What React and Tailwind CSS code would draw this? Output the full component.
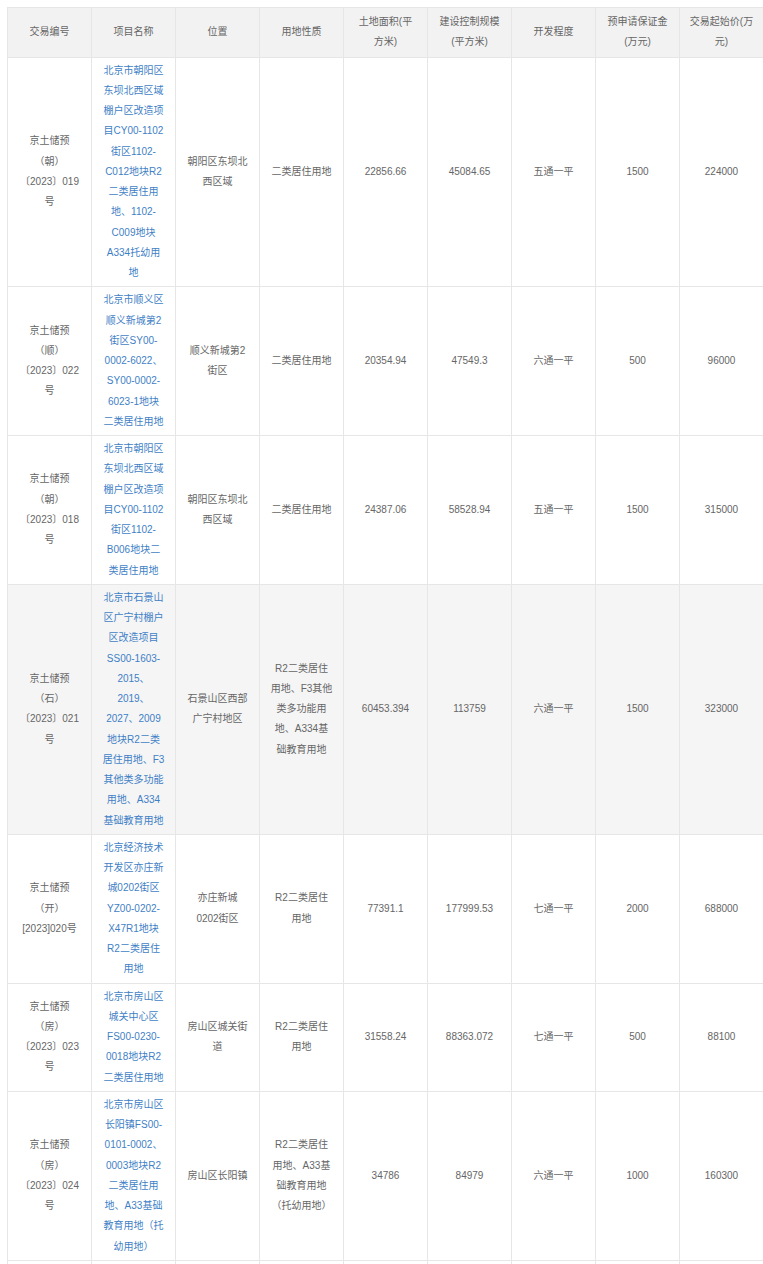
import React from "react";

const headers = [
  ["交易编号"],
  ["项目名称"],
  ["位置"],
  ["用地性质"],
  ["土地面积(平", "方米)"],
  ["建设控制规模", "(平方米)"],
  ["开发程度"],
  ["预申请保证金", "(万元)"],
  ["交易起始价(万", "元)"],
];

const rows = [
  {
    code: ["京土储预", "（朝）", "〔2023〕019", "号"],
    name: [
      "北京市朝阳区",
      "东坝北西区域",
      "棚户区改造项",
      "目CY00-1102",
      "街区1102-",
      "C012地块R2",
      "二类居住用",
      "地、1102-",
      "C009地块",
      "A334托幼用",
      "地",
    ],
    place: ["朝阳区东坝北", "西区域"],
    use: ["二类居住用地"],
    area: "22856.66",
    scale: "45084.65",
    level: "五通一平",
    deposit: "1500",
    price: "224000",
  },
  {
    code: ["京土储预", "（顺）", "〔2023〕022", "号"],
    name: [
      "北京市顺义区",
      "顺义新城第2",
      "街区SY00-",
      "0002-6022、",
      "SY00-0002-",
      "6023-1地块",
      "二类居住用地",
    ],
    place: ["顺义新城第2", "街区"],
    use: ["二类居住用地"],
    area: "20354.94",
    scale: "47549.3",
    level: "六通一平",
    deposit: "500",
    price: "96000",
  },
  {
    code: ["京土储预", "（朝）", "〔2023〕018", "号"],
    name: [
      "北京市朝阳区",
      "东坝北西区域",
      "棚户区改造项",
      "目CY00-1102",
      "街区1102-",
      "B006地块二",
      "类居住用地",
    ],
    place: ["朝阳区东坝北", "西区域"],
    use: ["二类居住用地"],
    area: "24387.06",
    scale: "58528.94",
    level: "五通一平",
    deposit: "1500",
    price: "315000",
  },
  {
    code: ["京土储预", "（石）", "〔2023〕021", "号"],
    name: [
      "北京市石景山",
      "区广宁村棚户",
      "区改造项目",
      "SS00-1603-",
      "2015、",
      "2019、",
      "2027、2009",
      "地块R2二类",
      "居住用地、F3",
      "其他类多功能",
      "用地、A334",
      "基础教育用地",
    ],
    place: ["石景山区西部", "广宁村地区"],
    use: ["R2二类居住", "用地、F3其他", "类多功能用", "地、A334基", "础教育用地"],
    area: "60453.394",
    scale: "113759",
    level: "六通一平",
    deposit: "1500",
    price: "323000",
    shaded: true,
  },
  {
    code: ["京土储预", "（开）", "[2023]020号"],
    name: [
      "北京经济技术",
      "开发区亦庄新",
      "城0202街区",
      "YZ00-0202-",
      "X47R1地块",
      "R2二类居住",
      "用地",
    ],
    place: ["亦庄新城", "0202街区"],
    use: ["R2二类居住", "用地"],
    area: "77391.1",
    scale: "177999.53",
    level: "七通一平",
    deposit: "2000",
    price: "688000",
  },
  {
    code: ["京土储预", "（房）", "〔2023〕023", "号"],
    name: [
      "北京市房山区",
      "城关中心区",
      "FS00-0230-",
      "0018地块R2",
      "二类居住用地",
    ],
    place: ["房山区城关街", "道"],
    use: ["R2二类居住", "用地"],
    area: "31558.24",
    scale: "88363.072",
    level: "七通一平",
    deposit: "500",
    price: "88100",
  },
  {
    code: ["京土储预", "（房）", "〔2023〕024", "号"],
    name: [
      "北京市房山区",
      "长阳镇FS00-",
      "0101-0002、",
      "0003地块R2",
      "二类居住用",
      "地、A33基础",
      "教育用地（托",
      "幼用地）",
    ],
    place: ["房山区长阳镇"],
    use: ["R2二类居住", "用地、A33基", "础教育用地", "（托幼用地）"],
    area: "34786",
    scale: "84979",
    level: "六通一平",
    deposit: "1000",
    price: "160300",
  },
];

function Lines({ items }) {
  return (
    <>
      {items.map((line, i) => (
        <div key={i} className="whitespace-nowrap">
          {line}
        </div>
      ))}
    </>
  );
}

const cell = "border border-[#e6e6e6] px-0 py-[3px] text-center align-middle";

export default function App() {
  return (
    <div className="min-h-screen bg-white pl-[7px] pt-[7px] overflow-hidden font-['Liberation_Sans','Noto_Sans_CJK_SC',sans-serif] text-[10px] leading-[20.25px] text-[#666]">
      <table className="table-fixed border-collapse w-[756px]">
        <colgroup>
          {headers.map((_, i) => (
            <col key={i} className="w-[84px]" />
          ))}
        </colgroup>
        <thead>
          <tr className="bg-[#f2f2f2]">
            {headers.map((h, i) => (
              <th key={i} className={`${cell} py-[4px] font-normal text-[#666]`}>
                <Lines items={h} />
              </th>
            ))}
          </tr>
        </thead>
        <tbody>
          {rows.map((r, i) => (
            <tr key={i} className={r.shaded ? "bg-[#f5f5f5]" : "bg-white"}>
              <td className={cell}>
                <Lines items={r.code} />
              </td>
              <td className={`${cell} text-[#3f7fc6]`}>
                <Lines items={r.name} />
              </td>
              <td className={cell}>
                <Lines items={r.place} />
              </td>
              <td className={cell}>
                <Lines items={r.use} />
              </td>
              <td className={cell}>{r.area}</td>
              <td className={cell}>{r.scale}</td>
              <td className={cell}>{r.level}</td>
              <td className={cell}>{r.deposit}</td>
              <td className={cell}>{r.price}</td>
            </tr>
          ))}
          <tr className="bg-white">
            {headers.map((_, i) => (
              <td key={i} className={`${cell} h-[120px]`}></td>
            ))}
          </tr>
        </tbody>
      </table>
    </div>
  );
}
